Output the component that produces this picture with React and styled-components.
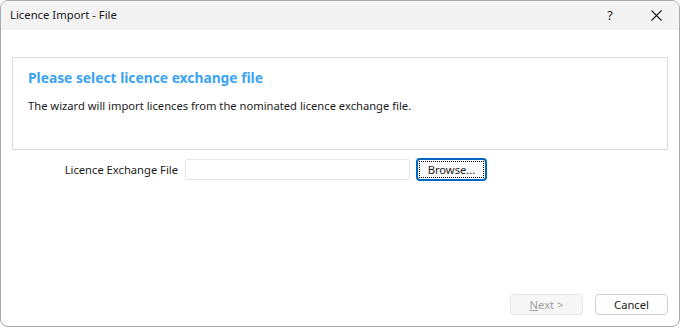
import React from 'react';
import styled, { createGlobalStyle } from 'styled-components';

const GlobalStyle = createGlobalStyle`
  html, body {
    margin: 0;
    padding: 0;
    background: #ffffff;
  }
  body {
    font-family: 'Noto Sans', 'Open Sans', sans-serif;
  }
`;

const Window = styled.div`
  box-sizing: border-box;
  width: 680px;
  height: 327px;
  border: 1px solid #a8a8a8;
  border-radius: 8px;
  overflow: hidden;
  display: flex;
  flex-direction: column;
  background: #ffffff;
`;

const TitleBar = styled.div`
  height: 29px;
  background: #f3f3f3;
  display: flex;
  align-items: center;
  padding-left: 9px;
  font-size: 11.3px;
  color: #1a1a1a;
`;

const Title = styled.div`
  flex: 1;
  padding-bottom: 2px;
`;

const TitleButton = styled.div`
  width: 46px;
  height: 29px;
  display: flex;
  align-items: center;
  justify-content: center;
  font-size: 12.5px;
  color: #1a1a1a;
`;

const Body = styled.div`
  flex: 1;
  display: flex;
  flex-direction: column;
  padding: 27px 11px 11px 11px;
`;

const Panel = styled.div`
  box-sizing: border-box;
  height: 93px;
  border: 1px solid #dcdcdc;
  padding: 10px 15px;
`;

const Heading = styled.div`
  font-size: 13.8px;
  font-weight: 700;
  color: #3ba3f4;
  line-height: 20px;
`;

const Description = styled.div`
  margin-top: 9px;
  font-size: 11.2px;
  color: #1a1a1a;
  line-height: 18px;
`;

const FieldRow = styled.div`
  display: flex;
  align-items: center;
  margin-top: 7px;
  height: 24px;
`;

const Label = styled.div`
  width: 173px;
  text-align: right;
  font-size: 11.2px;
  color: #1a1a1a;
  padding-right: 7px;
  box-sizing: border-box;
`;

const Input = styled.div`
  box-sizing: border-box;
  width: 225px;
  height: 21px;
  border: 1px solid #e6e6e6;
  border-radius: 2px;
`;

const Button = styled.div`
  box-sizing: border-box;
  height: ${(p) => p.h || 21}px;
  width: ${(p) => p.w}px;
  border: 1px solid ${(p) => (p.disabled ? '#e5e5e5' : '#d0d0d0')};
  border-radius: 4px;
  background: ${(p) => (p.disabled ? '#f7f7f7' : '#fdfdfd')};
  color: ${(p) => (p.disabled ? '#a0a0a0' : '#1a1a1a')};
  font-size: 11.2px;
  display: flex;
  align-items: center;
  justify-content: center;
`;

const FocusButton = styled(Button)`
  margin-left: 6px;
  border: 2px solid #0067c0;
  padding: 1px;
`;

const FocusRing = styled.div`
  flex: 1;
  align-self: stretch;
  border: 1px dotted #000000;
  display: flex;
  align-items: center;
  justify-content: center;
`;

const Spacer = styled.div`
  flex: 1;
`;

const Footer = styled.div`
  display: flex;
  justify-content: flex-end;
  gap: 12px;
`;

const Mnemonic = styled.span`
  text-decoration: underline;
`;

export default function App() {
  return (
    <>
      <GlobalStyle />
      <Window>
        <TitleBar>
          <Title>Licence Import - File</Title>
          <TitleButton>?</TitleButton>
          <TitleButton>
            <svg width="11" height="11" viewBox="0 0 11 11">
              <path d="M0.5 0.5 L10.5 10.5 M10.5 0.5 L0.5 10.5" stroke="#1a1a1a" strokeWidth="1.1" />
            </svg>
          </TitleButton>
        </TitleBar>
        <Body>
          <Panel>
            <Heading>Please select licence exchange file</Heading>
            <Description>The wizard will import licences from the nominated licence exchange file.</Description>
          </Panel>
          <FieldRow>
            <Label>Licence Exchange File</Label>
            <Input />
            <FocusButton w={71} h={23}>
              <FocusRing>Browse...</FocusRing>
            </FocusButton>
          </FieldRow>
          <Spacer />
          <Footer>
            <Button w={73} disabled>
              <span><Mnemonic>N</Mnemonic>ext &gt;</span>
            </Button>
            <Button w={73}>Cancel</Button>
          </Footer>
        </Body>
      </Window>
    </>
  );
}
